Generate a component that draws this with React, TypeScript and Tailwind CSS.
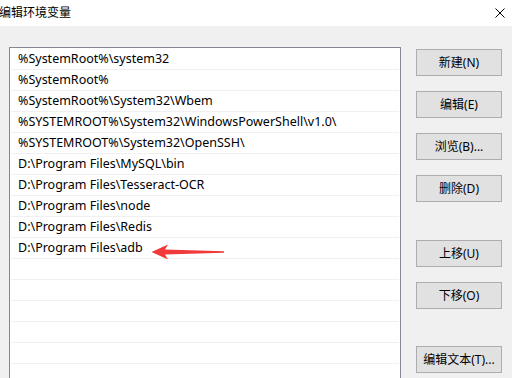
import React from "react";

const rows = [
  "%SystemRoot%\\system32",
  "%SystemRoot%",
  "%SystemRoot%\\System32\\Wbem",
  "%SYSTEMROOT%\\System32\\WindowsPowerShell\\v1.0\\",
  "%SYSTEMROOT%\\System32\\OpenSSH\\",
  "D:\\Program Files\\MySQL\\bin",
  "D:\\Program Files\\Tesseract-OCR",
  "D:\\Program Files\\node",
  "D:\\Program Files\\Redis",
  "D:\\Program Files\\adb",
  "",
  "",
  "",
  "",
  "",
  "",
];

const font = {
  fontFamily: '"Noto Sans", "Noto Sans CJK SC", sans-serif',
};

function Btn({ label, className = "" }: { label: string; className?: string }) {
  return (
    <div
      className={
        "h-[27px] w-[86px] flex items-center justify-center border border-[#adadad] bg-[#e1e1e1] text-[12px] text-black " +
        className
      }
    >
      {label}
    </div>
  );
}

export default function App() {
  return (
    <div className="w-[512px] h-[378px] overflow-hidden bg-[#f0f0f0] relative" style={font}>
      <div className="h-[26px] bg-white flex items-center justify-between">
        <span className="text-[12px] text-black -ml-[1px] leading-none">编辑环境变量</span>
        <svg width="10" height="10" viewBox="0 0 10 10" className="mr-[7px]">
          <path d="M0.5 0.5 L9.5 9.5 M9.5 0.5 L0.5 9.5" stroke="#000" strokeWidth="1" />
        </svg>
      </div>
      <div className="flex items-start pl-[9px]">
        <div className="relative mt-[21px] w-[392px] h-[400px] border border-[#828790] bg-white p-[1px]">
          {rows.map((r, i) => (
            <div
              key={i}
              className="h-[21px] border-b border-[#f0f0f0] pl-[7px] flex items-center text-[12.5px] text-black whitespace-nowrap"
            >
              {r}
            </div>
          ))}
          <svg
            className="absolute"
            style={{ left: 141, top: 196 }}
            width="74"
            height="18"
            viewBox="0 0 74 18"
          >
            <path
              d="M0.5 8 L17 0.5 L14 5.5 L73 7.2 L73 8.8 L14 10.5 L17 15.5 Z"
              fill="#f03a3a"
            />
          </svg>
        </div>
        <div className="ml-[15px] mt-[23px] flex flex-col">
          <Btn label="新建(N)" />
          <Btn label="编辑(E)" className="mt-[15px]" />
          <Btn label="浏览(B)..." className="mt-[15px]" />
          <Btn label="删除(D)" className="mt-[15px]" />
          <Btn label="上移(U)" className="mt-[38px]" />
          <Btn label="下移(O)" className="mt-[15px]" />
          <Btn label="编辑文本(T)..." className="mt-[37px]" />
        </div>
      </div>
    </div>
  );
}
